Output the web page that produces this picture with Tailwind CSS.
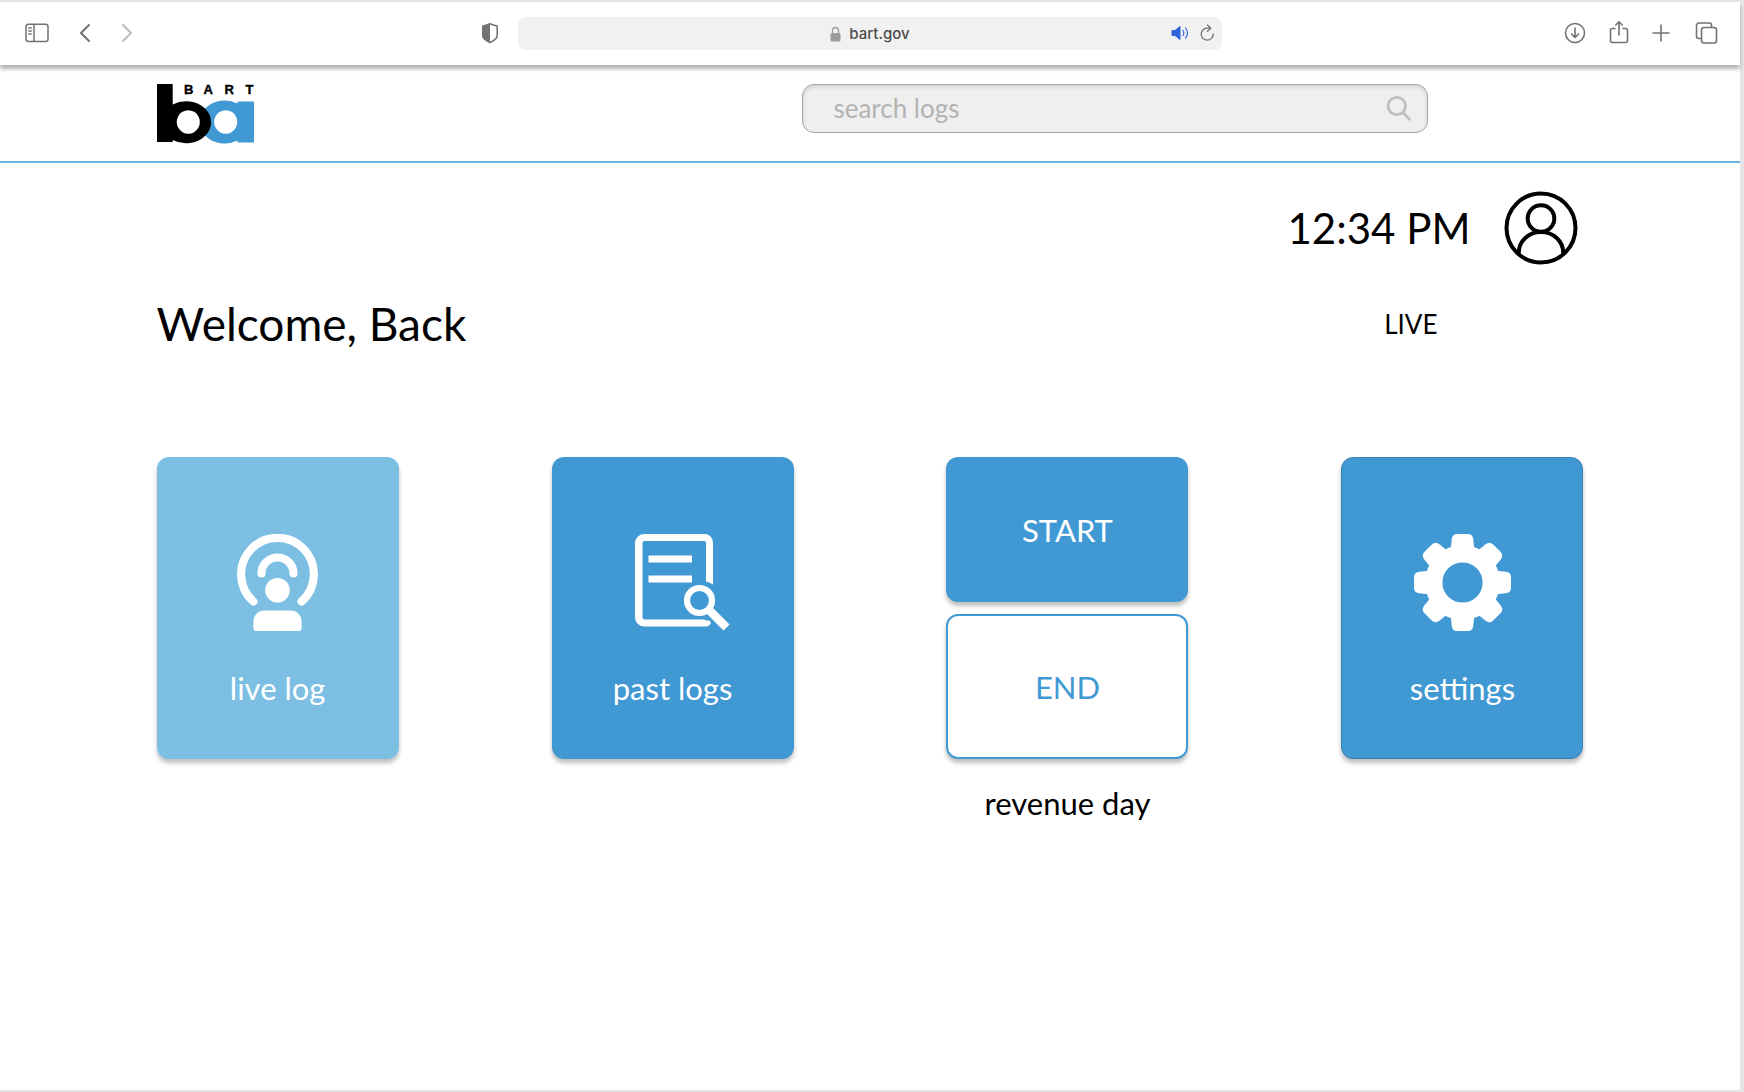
<!DOCTYPE html>
<html lang="en">
<head>
<meta charset="utf-8">
<meta name="viewport" content="width=device-width, initial-scale=1">
<title>BART logs</title>
<script src="https://cdn.jsdelivr.net/npm/@tailwindcss/browser@4"></script>
</head>
<body class="min-h-screen bg-[#e5e5e5] pt-0.5 pr-1 pb-0.5 flex flex-col font-['Lato',sans-serif] text-black">
<div class="grow bg-white flex flex-col">

  <!-- Browser toolbar -->
  <div class="h-[63px] shrink-0 bg-white shadow-[0_4px_4px_rgba(0,0,0,0.3)] grid grid-cols-[1fr_minmax(0,704px)_1fr] items-center text-[#737373]">
    <div class="flex items-center pb-0.5 pl-[25px] pr-[19px]">
      <button type="button" aria-label="Sidebar"><svg class="block" width="24" height="20" viewBox="0 0 24 20" fill="none" stroke="currentColor" stroke-width="1.5"><rect x="1" y="1.2" width="22" height="17.2" rx="2.5"/><path d="M9 1.2v17.2M3.3 5h3.4M3.3 8h3.4M3.3 11h3.4"/></svg></button>
      <button type="button" aria-label="Back" class="ml-[30px]"><svg class="block" width="12" height="20" viewBox="0 0 12 20" fill="none" stroke="currentColor" stroke-width="2" stroke-linecap="round" stroke-linejoin="round"><path d="M10 2L2 10l8 8"/></svg></button>
      <button type="button" aria-label="Forward" class="ml-[30px] text-[#bcbcbc]"><svg class="block" width="12" height="20" viewBox="0 0 12 20" fill="none" stroke="currentColor" stroke-width="2" stroke-linecap="round" stroke-linejoin="round"><path d="M2 2l8 8-8 8"/></svg></button>
      <button type="button" aria-label="Privacy report" class="ml-auto"><svg class="block" width="18" height="22" viewBox="0 0 18 22"><path d="M9 1.8C6.500 3 4 3.600 1.800 4v9.500c0 3 4 5.500 7.200 6.900 3.200-1.400 7.200-3.900 7.200-6.900V4C14 3.600 11.500 3 9 1.800z" fill="none" stroke="currentColor" stroke-width="1.600" stroke-linejoin="round"/><path d="M9 1.500C6.500 3 4 3.500 1.500 4v9.500C1.500 17 6 19.500 9 20.800z" fill="currentColor"/></svg></button>
    </div>
    <div class="h-[33px] rounded-lg bg-[#f1f1f1] grid grid-cols-[1fr_auto_1fr] items-center">
      <a href="#" class="col-start-2 flex items-center gap-2 font-['Inter','Roboto',sans-serif] text-[15px] leading-5 font-medium text-[#4c4c4c]">
        <svg width="11" height="16" viewBox="0 0 11 16"><rect x="0.500" y="7" width="10" height="8.500" rx="1.500" fill="#9d9d9d"/><path d="M2.500 7.500V4.500a3 3 0 0 1 6 0v3" fill="none" stroke="#9d9d9d" stroke-width="1.300"/></svg>
        bart.gov
      </a>
      <div class="flex items-center justify-end gap-2.5 pb-0.5 pr-[7px]">
        <button type="button" aria-label="Mute tab" class="text-[#2f62d9]"><svg class="block" width="19" height="16" viewBox="0 0 19 16"><path d="M1 5.500h3L9 1.500v13l-5-4H1z" fill="currentColor" stroke="currentColor" stroke-linejoin="round"/><path d="M12 5.500c1 1.500 1 3.500 0 5M14.500 3c2.400 3 2.400 7 0 10" fill="none" stroke="currentColor" stroke-width="1.200" stroke-linecap="round"/></svg></button>
        <button type="button" aria-label="Reload"><svg class="block" width="15" height="18" viewBox="0 0 15 18" fill="none" stroke="currentColor" stroke-width="1.300" stroke-linecap="round" stroke-linejoin="round"><path d="M13.200 10A6 6 0 1 1 8 4.200h2.500M7.500 1l3.300 3.200L7.500 7.300"/></svg></button>
      </div>
    </div>
    <div class="flex items-center justify-end pb-0.5 pr-[22px]">
      <button type="button" aria-label="Downloads"><svg class="block" width="22" height="22" viewBox="0 0 22 22" fill="none" stroke="currentColor" stroke-width="1.600" stroke-linecap="round" stroke-linejoin="round"><circle cx="11" cy="11" r="9.500"/><path d="M11 6v9.500M7.500 12l3.500 3.500 3.500-3.500"/></svg></button>
      <button type="button" aria-label="Share" class="ml-[23px]"><svg class="block -mt-0.5" width="20" height="24" viewBox="0 0 20 24" fill="none" stroke="currentColor" stroke-width="1.600" stroke-linecap="round" stroke-linejoin="round"><path d="M6 8.500H3.500A2 2 0 0 0 1.500 10.500v10a2 2 0 0 0 2 2h13a2 2 0 0 0 2-2v-10a2 2 0 0 0-2-2H14M10 15V2M6.800 5L10 1.800 13.200 5"/></svg></button>
      <button type="button" aria-label="New tab" class="ml-[23px]"><svg class="block" width="18" height="18" viewBox="0 0 18 18" fill="none" stroke="currentColor" stroke-width="1.600" stroke-linecap="round"><path d="M9 1v16M1 9h16"/></svg></button>
      <button type="button" aria-label="Tab overview" class="ml-[25px]"><svg class="block" width="23" height="22" viewBox="0 0 23 22" fill="none" stroke="currentColor" stroke-width="1.600"><rect x="6.500" y="5.500" width="15" height="15.500" rx="2.500"/><path d="M6.500 16.500H4a2.500 2.500 0 0 1-2.500-2.500V3.500A2.500 2.500 0 0 1 4 1h10.500A2 2 0 0 1 16.500 3v2.500"/></svg></button>
    </div>
  </div>

  <!-- Site header -->
  <header class="h-[98px] shrink-0 border-b-2 border-[#67b4e2] px-[9%] pt-[19px] flex items-start">
    <a href="#" aria-label="BART home">
      <svg class="block overflow-visible" width="98" height="61" viewBox="0 0 98 61">
        <path fill="#4199d4" fill-rule="evenodd" d="M80.500 19.500V17.500H97V58.500H80.500V56.500A25 21.500 0 1 1 80.500 19.500zM68.700 26.300a11.600 11.700 0 1 0 .01 0z"/>
        <path fill="#000" fill-rule="evenodd" d="M0 0H15.700V20.500A25 21 0 1 1 15.700 56V58H0zM31.300 26.300a11.600 11.700 0 1 0 .01 0z"/>
        <text x="27 46.500 67.500 88.500" y="10" font-family="'Liberation Sans',sans-serif" font-weight="700" font-size="13" stroke="#000" stroke-width="0.400">BART</text>
      </svg>
    </a>
    <label class="ml-auto mr-[155px] w-[626px] h-[49px] rounded-xl border border-[#a5a5a5] bg-[#efefef] shadow-[inset_0_2px_4px_rgba(0,0,0,0.12)] flex items-center pl-[30px] pb-0.5 pr-[15px]">
      <input type="search" aria-label="search logs" placeholder="search logs" class="min-w-0 grow bg-transparent text-[26px] leading-8 outline-none placeholder:text-[#b3b3b3]">
      <svg class="shrink-0" width="26" height="26" viewBox="0 0 26 26" fill="none" stroke="#c0c0c0" stroke-width="2.800" stroke-linecap="round"><circle cx="10.800" cy="11" r="8.700"/><path d="M17.200 17.600l6.300 6.700"/></svg>
    </label>
  </header>

  <main class="px-[9%] flex flex-col">
    <div class="mt-7 pr-[5px] h-[74px] flex items-center justify-end gap-[34px]">
      <time class="text-[42px] leading-[50px]">12:34 PM</time>
      <button type="button" aria-label="Profile"><svg class="block" width="74" height="74" viewBox="0 0 74 74" fill="none" stroke="#000" stroke-width="4"><circle cx="37" cy="37" r="34.500"/><circle cx="37" cy="27.500" r="13.300"/><path d="M14.800 63v-1.500a22.200 20.500 0 0 1 44.400 0V63"/></svg></button>
    </div>
    <div class="mt-[34px] h-[50px] flex items-center justify-between pr-[146px]">
      <h1 class="text-[46px] leading-[50px]">Welcome, Back</h1>
      <p class="text-[26px] leading-8">LIVE</p>
    </div>
    <div class="mt-[108px] flex items-start justify-between">
      <button type="button" class="w-[242px] h-[302px] rounded-xl bg-[#7dbfe3] text-white shadow-[0_4px_4px_rgba(0,0,0,0.25)] flex flex-col items-center pt-[77px]">
        <svg width="97" height="97" viewBox="0 0 97 97" fill="none" stroke="#fff" stroke-width="8.200" stroke-linecap="round"><path d="M24.400 67.500A36.400 36.400 0 1 1 72.600 67.500M32.500 39.500a16 16 0 0 1 32 0"/><g fill="#fff" stroke="none"><circle cx="48.500" cy="56.300" r="12.300"/><path d="M24.400 87.500a11 11 0 0 1 11-11h26.200a11 11 0 0 1 11 11V94a3 3 0 0 1-3 3H27.400a3 3 0 0 1-3-3z"/></g></svg>
        <span class="mt-[39px] text-[31px] leading-9">live log</span>
      </button>
      <button type="button" class="w-[242px] h-[302px] rounded-xl bg-[#4199d4] text-white shadow-[0_4px_4px_rgba(0,0,0,0.25)] flex flex-col items-center pt-[77px]">
        <svg class="ml-[22px]" width="97" height="97" viewBox="0 0 97 97" fill="#fff"><path d="M9 0H69.500A8.500 8.500 0 0 1 78 8.500V50.500Q75 48.300 71 47.500V9Q71 7 69 7H9.500Q7.500 7 7.500 9V83.500Q7.500 85.500 9.500 85.500H69Q72 87 74.500 86.500Q77 89 74.500 91Q73 92.500 71 92.500H9A9 9 0 0 1 0 83.500V9A9 9 0 0 1 9 0zM13.500 21.500H57v7H13.500zM13.500 41.500H57v7H13.500z"/><g fill="none" stroke="#fff"><circle cx="64.500" cy="66.500" r="12.500" stroke-width="6.200"/><path d="M73.500 75.500l18 18" stroke-width="8.400"/></g></svg>
        <span class="mt-[39px] text-[31px] leading-9">past logs</span>
      </button>
      <div class="w-[242px] flex flex-col gap-3 text-center">
        <button type="button" class="h-[145px] rounded-xl bg-[#4199d4] text-white text-[31px] leading-9 shadow-[0_4px_4px_rgba(0,0,0,0.25)]">START</button>
        <button type="button" class="h-[145px] rounded-xl border-2 border-[#4199d4] bg-white text-[#4199d4] text-[31px] leading-9 shadow-[0_4px_4px_rgba(0,0,0,0.25)]">END</button>
        <p class="mt-3.5 text-[31px] leading-9">revenue day</p>
      </div>
      <button type="button" class="w-[242px] h-[302px] rounded-xl border border-[#3b82b2] bg-[#4199d4] text-white shadow-[0_4px_4px_rgba(0,0,0,0.25)] flex flex-col items-center pt-[76px]">
        <svg width="97" height="97" viewBox="-48.500 -48.500 97 97"><defs><path id="tooth" d="M-11.700-34L-10.800-43Q-10.200-48.500-5.500-48.500H5.500Q10.200-48.500 10.800-43L11.700-34z"/></defs><circle r="28.700" fill="none" stroke="#fff" stroke-width="17.200"/><g fill="#fff"><use href="#tooth"/><use href="#tooth" transform="rotate(45)"/><use href="#tooth" transform="rotate(90)"/><use href="#tooth" transform="rotate(135)"/><use href="#tooth" transform="rotate(180)"/><use href="#tooth" transform="rotate(225)"/><use href="#tooth" transform="rotate(270)"/><use href="#tooth" transform="rotate(315)"/></g></svg>
        <span class="mt-[39px] text-[31px] leading-9">settings</span>
      </button>
    </div>
  </main>
</div>
</body>
</html>
